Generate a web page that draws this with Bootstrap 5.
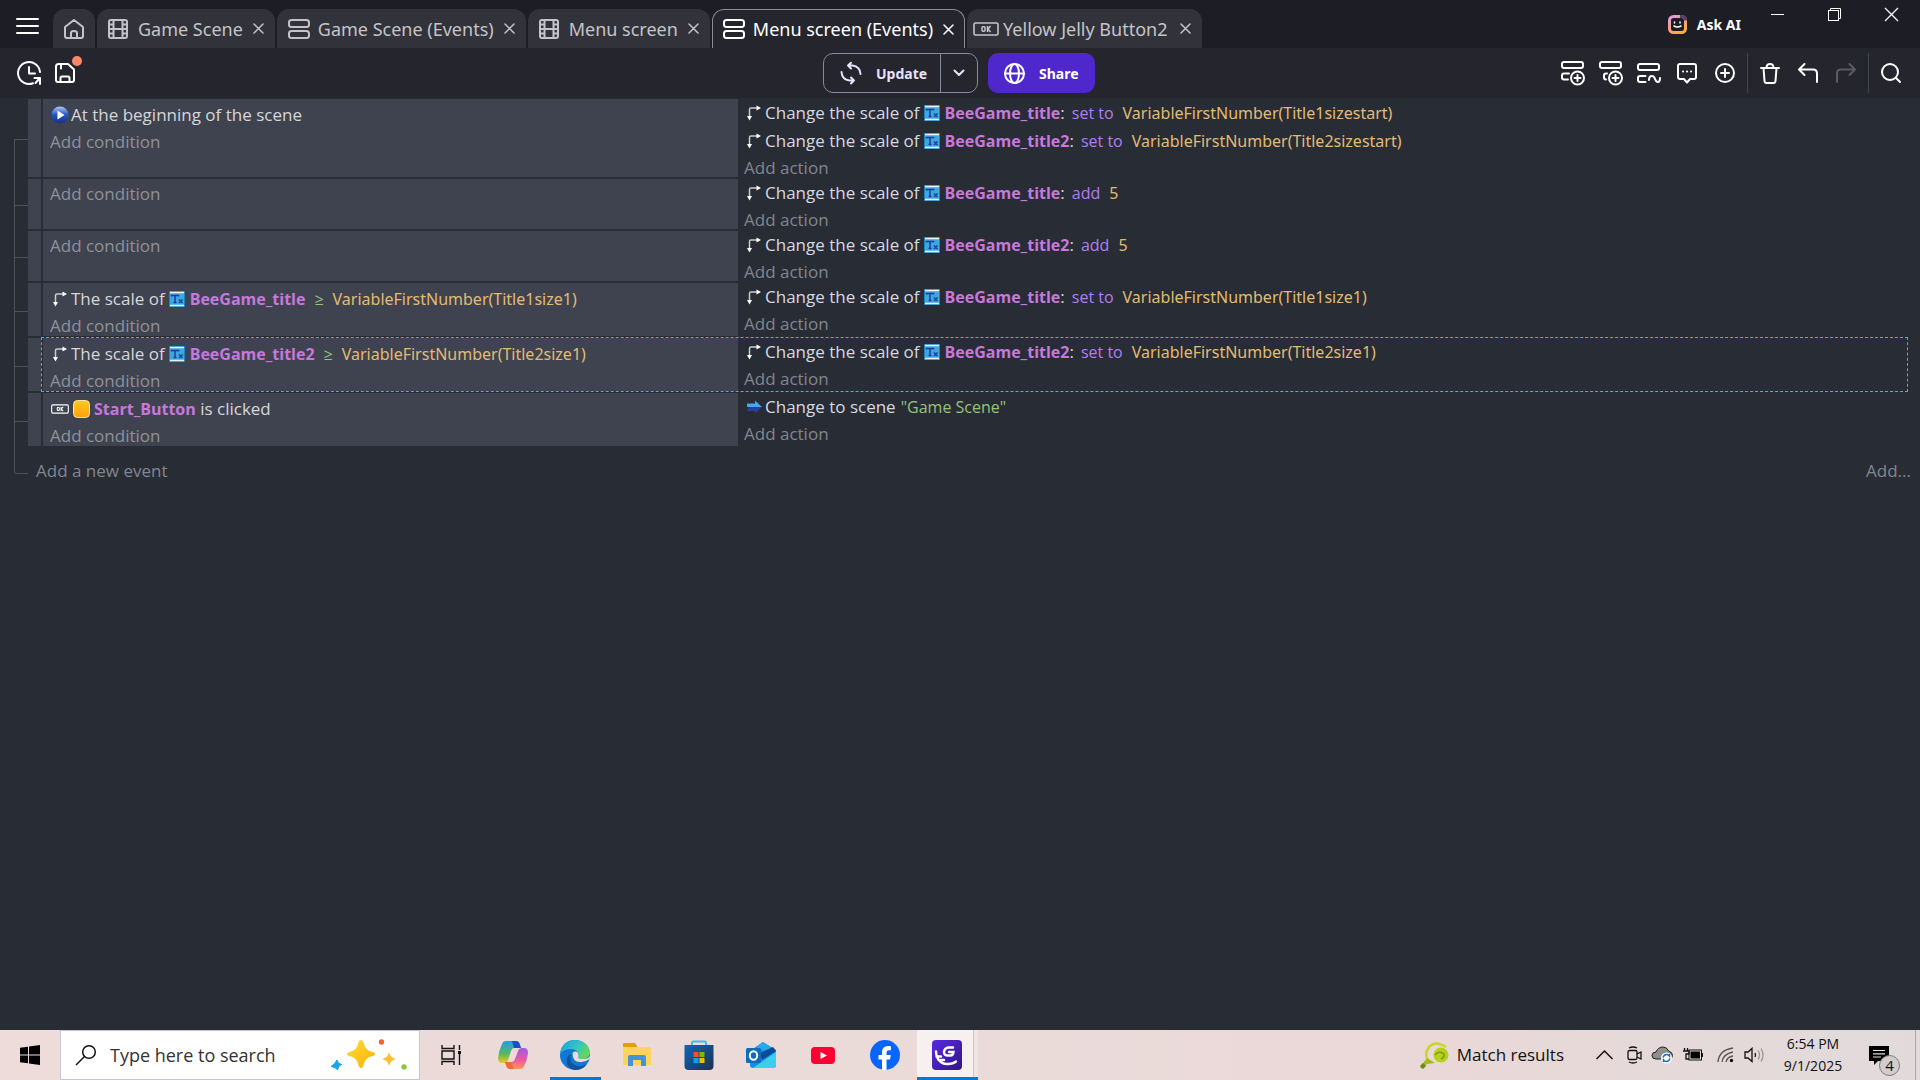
<!DOCTYPE html>
<html lang="en">
<head>
<meta charset="utf-8">
<meta name="viewport" content="width=device-width, initial-scale=1">
<title>Menu screen (Events)</title>
<link href="https://cdn.jsdelivr.net/npm/bootstrap@5.3.0/dist/css/bootstrap.min.css" rel="stylesheet">
<script src="https://cdn.jsdelivr.net/npm/bootstrap@5.3.0/dist/js/bootstrap.bundle.min.js"></script>
<style>
body{font-family:"Open Sans","Noto Sans",sans-serif;font-size:17px;background:#282c34;color:#d6d9e2;overflow:hidden}
button{background:none;border:0;padding:0;color:inherit;font-weight:inherit}
a{color:inherit;text-decoration:none}
svg{display:block;flex:none;overflow:visible}
.ico{fill:none;stroke:currentColor;stroke-width:2;stroke-linecap:round;stroke-linejoin:round}
/* title bar */
.titlebar{height:48px;background:#1d1d26;color:#c4c4c8;padding-left:16px;font-family:"Noto Sans",sans-serif;font-size:18px}
.tabs{gap:2px;padding-left:14px}
.tab{height:39px;background:#32323b;border-radius:12px 12px 0 0;padding:0 11px;line-height:28px}
.tab .pic{width:30px}
.tab .shut{margin-left:10px}
.tab-home{width:42px;padding:0 11px}
.tab-on{background:#25252e;color:#fff;border:1px solid #8d8d96;border-bottom:0;padding:0 10px}
.tab-ok{padding-left:6px}
.tab-ok .shut{margin-left:13px}
.askai{font-size:14px;font-weight:700;color:#fff;gap:10px;padding-right:8px}
.win{width:57px;height:29px;color:#fff}
/* toolbar */
.toolbar{height:50px;background:#25252e;color:#fff}
.side{flex:1 1 0}
.tool{width:38px;height:40px}
.rule{width:1px;height:40px;background:#3e4450;margin:0 3px}
.tools-end{padding-right:10px}
.main-btns{gap:10px}
.main-btn{height:40px;font:700 14px "Noto Sans",sans-serif;border-radius:10px}
.upd{border:1px solid #8a87a0;color:#e6e3fb}
.upd .go{width:116px;gap:14px;padding-left:16px}
.upd .more{width:37px;border-left:1px solid #8a87a0}
.share{background:#4f28cd;color:#fff;width:107px;gap:14px;padding-left:16px}
.dot{left:18px;top:-1px;width:10px;height:10px;background:#ff8569}
/* events */
.events{padding:1px 12px 0 14px}
.ev{position:relative}
.tree{width:14px;border-left:1px solid #4e525d;position:relative}
.tree::after{content:"";position:absolute;left:0;right:0;top:50%;border-top:1px solid #4e525d}
.ev:first-child .tree,.ev-end .tree{border-left-color:transparent}
.ev:first-child .tree::before,.ev-end .tree::before{content:"";position:absolute;left:-1px;top:50%;bottom:0;border-left:1px solid #4e525d}
.ev-end .tree::before{top:0;bottom:50%}
.grip{width:13px;background:#3f4350;margin-bottom:2px}
.body2{margin-left:2px;min-width:0}
.conds{flex:0 1 695px;background:#3f4350;color:#d6d7da;padding:2px 7px 0;margin-bottom:2px}
.acts{padding:0 6px}
.ln{display:flex;align-items:center;height:28px;white-space:nowrap;padding-left:1px}
.ico-i{width:20px;flex:none}
.scl{margin-left:2px}
.addl{height:23px;line-height:25px;display:block;color:#8e9199}
.acts .addl,.ev-end .addl{color:#828690}
.acts .addl{height:24px;line-height:26px}
.tx{margin:0 5px 0 4px}
.obj{font-weight:700;font-size:16px;color:#c678dd}
.op{font-size:16px;color:#b27cf4;margin-left:7px}
.cmp{color:#98c379;margin-left:9px;font-size:16px}
.expr{font-family:"Noto Sans",sans-serif;font-size:16px;color:#e2bb72;margin-left:9px}
.str{font-size:16px;color:#98c379;margin-left:5px}
.sel::after{content:"";position:absolute;left:27px;right:0;top:-1px;bottom:1px;border:1px dashed #3fb2ec;pointer-events:none}
.ev-end{height:50px;margin-right:-3px}
/* taskbar */
.taskbar{height:50px;background:linear-gradient(90deg,#eddcd9,#eadad8 55%,#e9d8d7 75%,#e1dadb);color:#111}
.start{width:60px}
.find{width:360px;background:#fff;border:1px solid #c9c5cd;padding-left:15px;padding-right:12px}
.find input{border:0;outline:0;font-size:18px;color:#333;width:190px;padding:0;margin-left:14px}
.find input::placeholder{color:#333;opacity:1}
.app{width:62px;height:50px;position:relative}
.run::before{content:"";position:absolute;left:6px;right:5px;bottom:0;height:3px;background:#0078d7}
.front::before{left:1px;right:0}
.front{background:linear-gradient(90deg,transparent 1px,#f6f0ee 1px,#f6f0ee 57px,#cfc5c4 57px,#cfc5c4 58px,#efe5e3 58px)}
.tray{gap:10px}
.news{padding-right:22px}
.clock{font-size:14px;line-height:22px;width:76px;text-align:center}
.count{left:10px;top:9px;width:21px;height:21px;border:1px solid #777;background:#d4cdce;font-size:15px;line-height:19px;text-align:center}
</style>
</head>
<body class="vh-100 d-flex flex-column">
<svg width="0" height="0" class="position-absolute" aria-hidden="true">
  <defs>
    <linearGradient id="gBall" x1="0" y1="0" x2="0" y2="1"><stop offset="0" stop-color="#a9c6f5"/><stop offset=".5" stop-color="#1f55c4"/><stop offset="1" stop-color="#1a2f86"/></linearGradient>
    <linearGradient id="gYel" x1="0" y1="0" x2="0" y2="1"><stop offset="0" stop-color="#ffc91f"/><stop offset="1" stop-color="#ff9f0d"/></linearGradient>
    <linearGradient id="gAi" x1="0" y1="0" x2=".6" y2="1"><stop offset="0" stop-color="#d99be8"/><stop offset=".5" stop-color="#f5a08c"/><stop offset="1" stop-color="#ffab45"/></linearGradient>
    <linearGradient id="gStar" x1="0" y1="0" x2="1" y2="1"><stop offset="0" stop-color="#ffdc3c"/><stop offset="1" stop-color="#fbb000"/></linearGradient>
    <linearGradient id="gCop1" x1="0" y1="0" x2="0" y2="1"><stop offset="0" stop-color="#1e9de8"/><stop offset=".6" stop-color="#5cb85a"/><stop offset="1" stop-color="#f5c518"/></linearGradient>
    <linearGradient id="gCop2" x1="0" y1="0" x2="0" y2="1"><stop offset="0" stop-color="#a05be8"/><stop offset=".6" stop-color="#ee5aa0"/><stop offset="1" stop-color="#ff9a4a"/></linearGradient>
    <linearGradient id="gEdge" x1="0" y1="0" x2="1" y2=".5"><stop offset="0" stop-color="#1a9fe0"/><stop offset=".6" stop-color="#35c6c0"/><stop offset="1" stop-color="#63d65a"/></linearGradient>
    <linearGradient id="gStore" x1="0" y1="0" x2="1" y2="1"><stop offset="0" stop-color="#0f66ba"/><stop offset="1" stop-color="#20304f"/></linearGradient>
    <linearGradient id="gGd" x1="0" y1="0" x2="1" y2="1"><stop offset="0" stop-color="#5a2be0"/><stop offset="1" stop-color="#34138a"/></linearGradient>
    <symbol id="film" viewBox="0 0 20 20"><g class="ico"><rect x="1" y="1" width="18" height="18" rx="2"/><path d="M5.500 1v18M14.500 1v18M5.500 10h9M1 5.500h4M1 10h4M1 14.500h4M15 5.500h4M15 10h4M15 14.500h4"/></g></symbol>
    <symbol id="evs" viewBox="0 0 22 20"><g class="ico"><rect x="1" y="1" width="20" height="7" rx="2.500"/><rect x="1" y="12" width="20" height="7" rx="2.500"/></g></symbol>
    <symbol id="xx" viewBox="0 0 11 11"><path d="M1 1l9 9M10 1l-9 9" fill="none" stroke="currentColor" stroke-width="1.500" stroke-linecap="round"/></symbol>
    <symbol id="okb" viewBox="0 0 26 14"><rect x="1" y="1" width="24" height="12" rx="1.500" fill="none" stroke="currentColor" stroke-width="1.600"/><rect x="9" y="4.800" width="3" height="4.400" rx="1" fill="none" stroke="currentColor" stroke-width="1.500"/><path d="M14.500 4v6M17.500 4l-2.500 3 2.500 3" fill="none" stroke="currentColor" stroke-width="1.500"/></symbol>
    <symbol id="scl" viewBox="0 0 14 16"><path d="M2.500 12V4.500Q2.500 3 4 3H10" fill="none" stroke="#c9cbd0" stroke-width="1.500"/><path d="M9.500 .500L14 3 9.500 5.500zM0 11h5L2.500 15.500z" fill="#fff"/></symbol>
    <symbol id="txt" viewBox="0 0 16 16"><rect width="16" height="16" fill="#1f86c4"/><rect x="1" y="2" width="14" height="12" fill="#3ea6e0"/><path d="M1 1.500h14M1 14.500h14" stroke="#e8f5fc" stroke-width="1.400"/><path d="M2.500 5.500V4.500h7v1M6 4.500v7M4.500 11.500h3M10 8.500l3.500 3.500M13.500 8.500L10 12" stroke="#1c3f9b" stroke-width="1.500" fill="none"/></symbol>
  </defs>
</svg>

<header class="titlebar d-flex align-items-end flex-shrink-0">
  <button class="align-self-center" aria-label="Main menu"><svg width="23" height="20" class="ico mt-1" viewBox="0 0 23 20"><path d="M1 3h21M1 10h21M1 17h21" stroke="#fff"/></svg></button>
  <nav class="tabs d-flex align-items-end">
    <button class="tab tab-home d-flex align-items-center" aria-label="Home"><svg width="20" height="20" class="ico" viewBox="0 0 20 20"><path d="M1 8L10 1l9 7v9q0 2-2 2H3q-2 0-2-2zM7 19v-5q0-2 3-2t3 2v5"/></svg></button>
    <div class="tab d-flex align-items-center"><span class="pic"><svg width="20" height="20"><use href="#film"/></svg></span><a href="#">Game Scene</a><button class="shut" aria-label="Close Game Scene"><svg width="11" height="11"><use href="#xx"/></svg></button></div>
    <div class="tab d-flex align-items-center"><span class="pic"><svg width="22" height="20"><use href="#evs"/></svg></span><a href="#">Game Scene (Events)</a><button class="shut" aria-label="Close Game Scene (Events)"><svg width="11" height="11"><use href="#xx"/></svg></button></div>
    <div class="tab d-flex align-items-center"><span class="pic"><svg width="20" height="20"><use href="#film"/></svg></span><a href="#">Menu screen</a><button class="shut" aria-label="Close Menu screen"><svg width="11" height="11"><use href="#xx"/></svg></button></div>
    <div class="tab tab-on d-flex align-items-center"><span class="pic"><svg width="22" height="20"><use href="#evs"/></svg></span><a href="#">Menu screen (Events)</a><button class="shut" aria-label="Close Menu screen (Events)"><svg width="11" height="11"><use href="#xx"/></svg></button></div>
    <div class="tab tab-ok d-flex align-items-center"><span class="pic"><svg width="26" height="14"><use href="#okb"/></svg></span><a href="#">Yellow Jelly Button2</a><button class="shut" aria-label="Close Yellow Jelly Button2"><svg width="11" height="11"><use href="#xx"/></svg></button></div>
  </nav>
  <div class="ms-auto d-flex align-self-stretch">
    <button class="askai d-flex align-items-center"><svg width="19" height="19" viewBox="0 0 19 19"><rect x="1.500" y="1.500" width="16" height="16" rx="4" fill="#1d1d26" stroke="url(#gAi)" stroke-width="3"/><path d="M12 1.500h2q3.500 0 3.500 4" fill="none" stroke="#54406a" stroke-width="3"/><path d="M6.500 7v1M12 7v1M6 11q3.200 2 7 0" fill="none" stroke="#fff" stroke-width="1.500" stroke-linecap="round"/></svg>Ask AI</button>
    <button class="win d-flex justify-content-center align-items-center" aria-label="Minimize"><svg width="13" height="13"><path d="M0 6.500h13" stroke="#fff" stroke-width="1"/></svg></button>
    <button class="win d-flex justify-content-center align-items-center" aria-label="Restore"><svg width="13" height="13" fill="none" stroke="#fff"><rect x=".5" y="2.500" width="10" height="10"/><path d="M2.500 2V.500h10v10h-2"/></svg></button>
    <button class="win d-flex justify-content-center align-items-center" aria-label="Close"><svg width="13" height="13" stroke="#fff" stroke-width="1.300"><path d="M0 0l13 13M13 0L0 13"/></svg></button>
  </div>
</header>

<div class="toolbar d-flex align-items-center flex-shrink-0">
  <div class="side d-flex ps-2">
    <button class="tool d-flex align-items-center justify-content-center ps-1" aria-label="History"><svg width="24" height="24" class="ico" viewBox="0 0 24 24"><path d="M23 11A11 11 0 1 0 16 22.300M12 6v6.500h6M17.500 17H23v6M23 17l-4.500 5"/></svg></button>
    <button class="tool d-flex align-items-center justify-content-center position-relative" aria-label="Save"><svg width="20" height="20" class="ico" viewBox="0 0 20 20"><path d="M3.500 1H13l6 5.500V17q0 2-2 2H3q-2 0-2-2V3.500Q1 1 3.500 1zM6 1v4.500M5.500 19v-4q0-1.500 1.500-1.500h6q1.500 0 1.500 1.500v4"/></svg><span class="dot rounded-circle position-absolute ms-2 mt-1"></span></button>
  </div>
  <div class="main-btns d-flex">
    <div class="upd main-btn d-flex">
      <button class="go d-flex align-items-center"><svg width="22" height="22" class="ico" viewBox="0 0 22 22"><path d="M8 3.500h4.500Q20 4.500 20.500 12M11 .800L8 3.500l3 3M14 18.500H9.500Q2 17.500 1.500 10M11 15.500l3 3-3 3"/></svg>Update</button>
      <button class="more d-flex align-items-center justify-content-center" aria-label="More update options"><svg width="12" height="8" class="ico"><path d="M1.500 1.500L6 6l4.500-4.500"/></svg></button>
    </div>
    <button class="share main-btn d-flex align-items-center"><svg width="21" height="21" class="ico" viewBox="0 0 21 21"><circle cx="10.500" cy="10.500" r="9.500"/><ellipse cx="10.500" cy="10.500" rx="4.500" ry="9.500"/><path d="M1 10.500h19"/></svg>Share</button>
  </div>
  <div class="side tools-end d-flex justify-content-end align-items-center">
    <button class="tool d-flex align-items-center justify-content-center" aria-label="Add event"><svg width="24" height="24" class="ico" viewBox="0 0 24 24"><rect x="1" y="1" width="21" height="6" rx="2"/><path d="M8 12.500H3q-2 0-2 2v2q0 2 2 2h4"/><circle cx="16.500" cy="17" r="6.500"/><path d="M13.500 17h6M16.500 14v6"/></svg></button>
    <button class="tool d-flex align-items-center justify-content-center" aria-label="Add sub-event"><svg width="24" height="24" class="ico" viewBox="0 0 24 24"><rect x="1" y="1" width="21" height="6" rx="2"/><path d="M8 12.500H7q-2 0-2 2v2q0 2 2 2"/><circle cx="16.500" cy="17" r="6.500"/><path d="M13.500 17h6M16.500 14v6"/></svg></button>
    <button class="tool d-flex align-items-center justify-content-center" aria-label="Add other event"><svg width="24" height="20" class="ico" viewBox="0 0 24 20"><rect x="1" y="1" width="21" height="6" rx="2"/><path d="M8.500 13H3q-2 0-2 2v2q0 2 2 2h5.500M12 17q0-4 3-4 2 0 3 3t3 3q2 0 2-4"/></svg></button>
    <button class="tool d-flex align-items-center justify-content-center" aria-label="Add comment"><svg width="20" height="21" class="ico" viewBox="0 0 20 21"><path d="M3 1h14q2 0 2 2v11q0 2-2 2h-4l-3 3.500L7 16H3q-2 0-2-2V3q0-2 2-2zM6 8.500h.1M10 8.500h.1M14 8.500h.1"/></svg></button>
    <button class="tool d-flex align-items-center justify-content-center" aria-label="Add"><svg width="20" height="20" class="ico" viewBox="0 0 20 20"><circle cx="10" cy="10" r="9"/><path d="M10 6v8M6 10h8"/></svg></button>
    <span class="rule"></span>
    <button class="tool d-flex align-items-center justify-content-center" aria-label="Delete"><svg width="20" height="21" class="ico" viewBox="0 0 20 21"><path d="M1 5h18M3.500 5l1 13q.200 2 2 2h7q1.800 0 2-2l1-13M6.500 5q0-4 3.500-4t3.500 4"/></svg></button>
    <button class="tool d-flex align-items-center justify-content-center" aria-label="Undo"><svg width="20" height="20" class="ico" viewBox="0 0 20 20"><path d="M6.500 1L1 6.500 6.500 12M1 6.500h14q4 0 4 4V19"/></svg></button>
    <button class="tool d-flex align-items-center justify-content-center" aria-label="Redo" disabled><svg width="20" height="20" class="ico" viewBox="0 0 20 20" color="#5a5b63"><path d="M13.500 1L19 6.500 13.500 12M19 6.500H5q-4 0-4 4V19"/></svg></button>
    <span class="rule"></span>
    <button class="tool d-flex align-items-center justify-content-center" aria-label="Search"><svg width="20" height="20" class="ico" viewBox="0 0 20 20"><circle cx="9" cy="9" r="8"/><path d="M15 15l4 4"/></svg></button>
  </div>
</div>

<main class="events flex-grow-1">
  <div class="ev d-flex">
    <div class="tree"></div><div class="grip"></div>
    <div class="body2 d-flex flex-grow-1">
      <div class="conds">
        <div class="ln"><span class="ico-i"><svg width="18" height="18" viewBox="0 0 18 18"><circle cx="9" cy="9" r="8.500" fill="url(#gBall)"/><path d="M6.500 4.500L13.500 9l-7 4.500z" fill="#fff"/></svg></span>At the beginning of the scene</div>
        <a href="#" class="addl">Add condition</a>
      </div>
      <div class="acts">
        <div class="ln"><span class="ico-i"><svg width="14" height="16" class="scl"><use href="#scl"/></svg></span>Change the scale of<svg class="tx" width="16" height="16"><use href="#txt"/></svg><b class="obj">BeeGame_title</b>:<span class="op">set to</span><span class="expr">VariableFirstNumber(Title1sizestart)</span></div>
        <div class="ln"><span class="ico-i"><svg width="14" height="16" class="scl"><use href="#scl"/></svg></span>Change the scale of<svg class="tx" width="16" height="16"><use href="#txt"/></svg><b class="obj">BeeGame_title2</b>:<span class="op">set to</span><span class="expr">VariableFirstNumber(Title2sizestart)</span></div>
        <a href="#" class="addl">Add action</a>
      </div>
    </div>
  </div>
  <div class="ev d-flex">
    <div class="tree"></div><div class="grip"></div>
    <div class="body2 d-flex flex-grow-1">
      <div class="conds"><a href="#" class="addl">Add condition</a></div>
      <div class="acts">
        <div class="ln"><span class="ico-i"><svg width="14" height="16" class="scl"><use href="#scl"/></svg></span>Change the scale of<svg class="tx" width="16" height="16"><use href="#txt"/></svg><b class="obj">BeeGame_title</b>:<span class="op">add</span><span class="expr">5</span></div>
        <a href="#" class="addl">Add action</a>
      </div>
    </div>
  </div>
  <div class="ev d-flex">
    <div class="tree"></div><div class="grip"></div>
    <div class="body2 d-flex flex-grow-1">
      <div class="conds"><a href="#" class="addl">Add condition</a></div>
      <div class="acts">
        <div class="ln"><span class="ico-i"><svg width="14" height="16" class="scl"><use href="#scl"/></svg></span>Change the scale of<svg class="tx" width="16" height="16"><use href="#txt"/></svg><b class="obj">BeeGame_title2</b>:<span class="op">add</span><span class="expr">5</span></div>
        <a href="#" class="addl">Add action</a>
      </div>
    </div>
  </div>
  <div class="ev d-flex">
    <div class="tree"></div><div class="grip"></div>
    <div class="body2 d-flex flex-grow-1">
      <div class="conds">
        <div class="ln"><span class="ico-i"><svg width="14" height="16" class="scl"><use href="#scl"/></svg></span>The scale of<svg class="tx" width="16" height="16"><use href="#txt"/></svg><b class="obj">BeeGame_title</b><span class="cmp">≥</span><span class="expr">VariableFirstNumber(Title1size1)</span></div>
        <a href="#" class="addl">Add condition</a>
      </div>
      <div class="acts">
        <div class="ln"><span class="ico-i"><svg width="14" height="16" class="scl"><use href="#scl"/></svg></span>Change the scale of<svg class="tx" width="16" height="16"><use href="#txt"/></svg><b class="obj">BeeGame_title</b>:<span class="op">set to</span><span class="expr">VariableFirstNumber(Title1size1)</span></div>
        <a href="#" class="addl">Add action</a>
      </div>
    </div>
  </div>
  <div class="ev sel d-flex">
    <div class="tree"></div><div class="grip"></div>
    <div class="body2 d-flex flex-grow-1">
      <div class="conds">
        <div class="ln"><span class="ico-i"><svg width="14" height="16" class="scl"><use href="#scl"/></svg></span>The scale of<svg class="tx" width="16" height="16"><use href="#txt"/></svg><b class="obj">BeeGame_title2</b><span class="cmp">≥</span><span class="expr">VariableFirstNumber(Title2size1)</span></div>
        <a href="#" class="addl">Add condition</a>
      </div>
      <div class="acts">
        <div class="ln"><span class="ico-i"><svg width="14" height="16" class="scl"><use href="#scl"/></svg></span>Change the scale of<svg class="tx" width="16" height="16"><use href="#txt"/></svg><b class="obj">BeeGame_title2</b>:<span class="op">set to</span><span class="expr">VariableFirstNumber(Title2size1)</span></div>
        <a href="#" class="addl">Add action</a>
      </div>
    </div>
  </div>
  <div class="ev d-flex">
    <div class="tree"></div><div class="grip"></div>
    <div class="body2 d-flex flex-grow-1">
      <div class="conds">
        <div class="ln"><svg width="18" height="10" class="me-1" color="#fff"><use href="#okb"/></svg><svg width="17" height="18" class="me-1"><rect x=".5" y=".5" width="16" height="17" rx="4" fill="url(#gYel)" stroke="#ffe9a6"/></svg><b class="obj">Start_Button</b>&nbsp;is clicked</div>
        <a href="#" class="addl">Add condition</a>
      </div>
      <div class="acts">
        <div class="ln"><span class="ico-i"><svg width="15" height="16" class="scl" viewBox="0 0 15 16"><path d="M0 4.500h8V1.500L15 8H0z" fill="#3ea9ec"/><path d="M0 12h8v2.500L15 8H2z" fill="#2a3d9a"/></svg></span>Change to scene<span class="str">"Game Scene"</span></div>
        <a href="#" class="addl">Add action</a>
      </div>
    </div>
  </div>
  <div class="ev ev-end d-flex align-items-stretch">
    <div class="tree"></div>
    <div class="d-flex flex-grow-1 align-items-center justify-content-between ps-2 pb-2">
      <a href="#" class="addl">Add a new event</a><a href="#" class="addl">Add...</a>
    </div>
  </div>
</main>

<footer class="taskbar d-flex flex-shrink-0">
  <button class="start d-flex align-items-center justify-content-center" aria-label="Start"><svg width="20" height="20" viewBox="0 0 20 20" fill="#000"><path d="M0 2.800L8 1.700V9.500H0zM9 1.500L20 0v9.500H9zM0 10.500h8v7.800L0 17.200zM9 10.500h11V20L9 18.500z"/></svg></button>
  <label class="find d-flex align-items-center"><svg width="20" height="20" fill="none" stroke="#111" stroke-width="1.500"><circle cx="13" cy="7" r="6.300"/><path d="M8.500 11.500L0 20"/></svg><input type="search" placeholder="Type here to search" aria-label="Type here to search">
    <svg width="76" height="32" viewBox="0 0 76 32" class="ms-auto"><path d="M30 1q2 0 3 4 1.500 6 7 7.500 4 1 4 2.500t-4 2.500q-5.500 1.500-7 7-1 4.500-3 4.500t-3-4.500q-1.500-5.500-7-7-4-1-4-2.500t4-2.500q5.500-1.500 7-7.500 1-4 3-4z" fill="url(#gStar)"/><path d="M58 13q1.200 5.800 7 7-5.800 1.200-7 7-1.200-5.800-7-7 5.800-1.200 7-7z" fill="#fcc02a"/><path d="M6 21q.500 3.500 4.500 4.500-3.500 1-4 5.500Q5 28 0 27.500 4 25 6 21z" fill="#14a5ea" stroke="#14a5ea"/><circle cx="50.500" cy="3" r="2.700" fill="#f26430"/><circle cx="73" cy="28" r="2.700" fill="#8bc83f"/></svg></label>
  <button class="app d-flex align-items-center justify-content-center" aria-label="Task view"><svg width="20" height="20" fill="none" stroke="#111" stroke-width="1.400"><path d="M1 0v3.500h12V0M1 20v-3.500h12V20M1 6h12v8H1zM18.500 0v5M18.500 9v11M18.500 6v3"/><path d="M17 7.500h3" stroke-width="3"/></svg></button>
  <button class="app d-flex align-items-center justify-content-center" aria-label="Copilot"><svg width="30" height="28" viewBox="0 0 30 28"><path d="M8 0h10q3 0 4 4l1 3H16q-2 0-3 3l-3 9q-1 3-4 3H4Q0 22 0 17 1 9 4 3q1-3 4-3z" fill="url(#gCop1)"/><path d="M14 0h4q3 0 4 4l1 3h-7z" fill="#1750c8"/><path d="M22 28H12q-3 0-4-4l-1-3h6q3 0 4-3l3-8q1-3 4-3h2q4 0 4 5-1 8-4 13-1 3-4 3z" fill="url(#gCop2)"/><path d="M16 28h-4q-3 0-4-4l-1-3h6z" fill="#f2693a"/></svg></button>
  <button class="app run d-flex align-items-center justify-content-center" aria-label="Edge"><svg width="30" height="30" viewBox="0 0 30 30"><circle cx="15" cy="15" r="15" fill="#0f78d4"/><path d="M0 14Q2 0 15 0q14 1 15 13-1 6-8 6-5 0-3.500-2.500Q19 10 12 9 3 9 0 14z" fill="url(#gEdge)"/><path d="M11 14q-3 9 6 12 6 1 10-2-4 6-12 6Q5 28 7 19q1-4 4-5z" fill="#12519c"/><path d="M12.500 13q0 10 9 9 5-.5 8-3 .500-2 .500-3-2 3.500-8 3-5-.5-3.500-2.500.500-4-2.500-5-2.500-.5-3.500 1.500z" fill="#eadad8"/></svg></button>
  <button class="app d-flex align-items-center justify-content-center" aria-label="File Explorer"><svg width="28" height="24" viewBox="0 0 28 24"><path d="M0 1q0-1 1-1h11l2 3v4H0z" fill="#e0a100"/><path d="M0 4h27q1 0 1 1v17H0z" fill="#ffd35c"/><path d="M5 23V14q0-2 2-2h14q2 0 2 2v9h-5v-6h-8v6z" fill="#3f96d8"/></svg></button>
  <button class="app d-flex align-items-center justify-content-center" aria-label="Microsoft Store"><svg width="30" height="30" viewBox="0 0 30 30"><path d="M8 6V3q0-1.500 1.500-1.500h11Q22 1.500 22 3v3" fill="none" stroke="#38c0f0" stroke-width="2"/><path d="M.5 5h29v21q0 4-4 4h-21q-4 0-4-4z" fill="url(#gStore)"/><path d="M9.500 12h5v5h-5z" fill="#f25022"/><path d="M15.500 12h5v5h-5z" fill="#7fba00"/><path d="M9.500 18h5v5h-5z" fill="#00a4ef"/><path d="M15.500 18h5v5h-5z" fill="#ffb900"/></svg></button>
  <button class="app d-flex align-items-center justify-content-center" aria-label="Outlook"><svg width="30" height="26" viewBox="0 0 30 26"><path d="M4 9L17 0l13 8v15q0 3-3 3H7q-3 0-3-3z" fill="#1490df"/><path d="M10 5l7-5 11 7-5 4z" fill="#28a8ea"/><path d="M14 11L27 5l3 4-14 9z" fill="#0a4a9a"/><path d="M30 10v13q0 3-3 3H7z" fill="#3ccdf0"/><rect y="6" width="15" height="15" rx="1.500" fill="#0f6cbd"/><ellipse cx="7.500" cy="13.500" rx="3.700" ry="4.200" fill="none" stroke="#fff" stroke-width="2"/></svg></button>
  <button class="app d-flex align-items-center justify-content-center" aria-label="YouTube"><svg width="24" height="17"><rect width="24" height="17" rx="4" fill="#ff0033"/><path d="M9.500 5l6.500 3.500-6.500 3.500z" fill="#fff"/></svg></button>
  <button class="app d-flex align-items-center justify-content-center" aria-label="Facebook"><svg width="30" height="30" viewBox="0 0 30 30"><circle cx="15" cy="15" r="15" fill="#0866ff"/><path d="M12 30V19.500H8.500V15H12v-2.500q0-6.500 6-6.500 1.500 0 3 .300v4h-2q-2.500 0-2.500 2.200V15h4.300l-.8 4.500h-3.500V30z" fill="#fff"/></svg></button>
  <button class="app run front d-flex align-items-center justify-content-center" aria-label="GDevelop"><svg width="30" height="30" viewBox="0 0 30 30"><rect width="30" height="30" rx="4" fill="url(#gGd)"/><path d="M21 7.500h-4.500q-4 .5-4.500 4.500 0 3.500 4 3.500h2.500q2.500 0 3-3.500H17M4 11.500q0 4 2 7.500 4 5.500 10 5 5 0 8-2.500M4.500 16.500H9M9 20h3" fill="none" stroke="#fff" stroke-width="2.400" stroke-linecap="round"/></svg></button>
  <div class="tray ms-auto d-flex align-items-center">
    <button class="news d-flex align-items-center gap-2"><svg width="30" height="29" viewBox="0 0 30 29"><path d="M9 19Q5 13 10 6q6-7 17 0" fill="none" stroke="#c8d81c" stroke-width="2.500"/><path d="M8 17l8 5-8 1-5 5-2-2z" fill="#a3bc1a"/><path d="M1 25l3-3 3 3-3 3z" fill="#6f8a10"/><circle cx="22" cy="14" r="7.500" fill="#b6d11c"/><path d="M16 14q4-5 9-1 1 3-3 5" stroke="#7d9a10" stroke-width="1.500" fill="none"/></svg>Match results</button>
    <button aria-label="Show hidden icons"><svg width="17" height="10" fill="none" stroke="#111" stroke-width="1.500"><path d="M.5 9L8.500 1l8 8"/></svg></button>
    <svg class="ms-1" width="15" height="18" fill="none" stroke="#111" stroke-width="1.300"><rect x="1" y="4.500" width="9" height="9" rx="1.500"/><path d="M10 8l4-2v7l-4-2M2 2q4-2 8 0M2 16q4 2 8 0"/></svg>
    <svg width="21" height="18" viewBox="0 0 21 18"><path d="M4 13q-4 0-4-3.500T4 6q2-5 7-5 4 0 5.500 4 4 1 4 4.500 0 3.500-4 3.500z" fill="#8e8e8e" stroke="#222"/><circle cx="14.500" cy="12" r="5.500" fill="#fff"/><path d="M11 11.500q1-3 3.500-3 2 0 3 1.500v-2M18 12.500q-1 3-3.500 3-2 0-3-1.500v2" fill="none" stroke="#1768c0" stroke-width="1.400"/></svg>
    <svg width="20" height="14" viewBox="0 0 20 14"><path d="M1.500 0v3M4.500 0v3M0 3h6v3H3v5h3" fill="none" stroke="#111" stroke-width="1.300"/><rect x="6" y="2" width="12.500" height="10" fill="none" stroke="#111"/><rect x="7.500" y="3.500" width="9.500" height="7" fill="#000"/><path d="M19.300 5v4" stroke="#111" stroke-width="1.400"/></svg>
    <svg width="17" height="16" viewBox="0 0 17 16" class="ms-1" fill="none" stroke="#555" stroke-width="1.300"><path d="M1 15Q2 3 16 1M5 15Q6 7 16 5M9 15q1-5 7-6"/><circle cx="14.500" cy="13.500" r="1.700" fill="#111" stroke="none"/></svg>
    <svg width="21" height="16" viewBox="0 0 21 16" fill="none" stroke="#111" stroke-width="1.300"><path d="M1 5h3l4-3.500v13L4 11H1zM11 6q1 2 0 4"/><path d="M14 3.500q3 4.500 0 9M17 1.500q4 6.500 0 13" stroke="#9c9696"/></svg>
    <div class="clock">6:54 PM<br>9/1/2025</div>
    <button class="position-relative ms-2 me-3" aria-label="Notifications"><svg width="20" height="19" viewBox="0 0 20 19"><path d="M0 0h20v15H9l-4 4v-4H0z" fill="#000"/><path d="M4 4.500h12M4 7.800h12M4 11h8" stroke="#ddd" stroke-width="1.200"/></svg><span class="count rounded-circle position-absolute">4</span></button>
    <span class="border-start border-secondary align-self-stretch opacity-50 pe-1"></span>
  </div>
</footer>
</body>
</html>
